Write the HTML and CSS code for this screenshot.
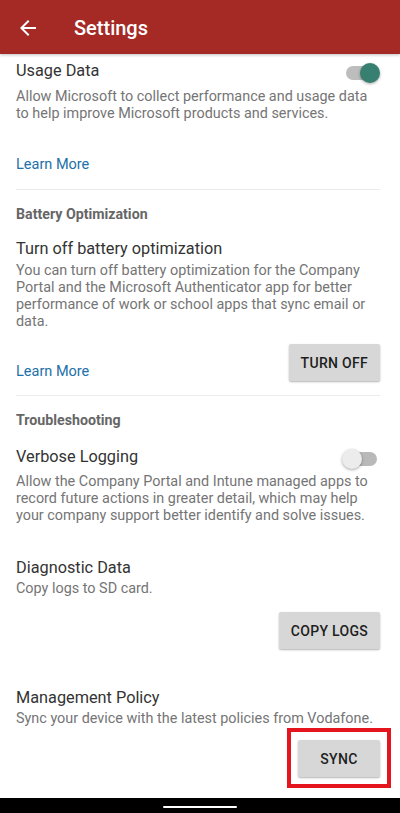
FILE: index.html
```html
<!DOCTYPE html>
<html>
<head>
    <meta charset="utf-8">
    <title>Settings</title>
    <link rel="stylesheet" href="styles.css">
</head>
<body>
    <div class="screen">
        <div class="appbar">
            <svg class="back" width="24" height="24" viewBox="0 0 24 24">
                <path d="M20 11H7.83l5.59-5.59L12 4l-8 8 8 8 1.41-1.41L7.83 13H20v-2z" fill="#fff"/>
            </svg>
            <span class="appbar-title">Settings</span>
        </div>

        <div class="content">
            <!-- usage data -->
            <div class="section">
                <div class="title-row first">
                    <span class="title">Usage Data</span>
                    <span class="toggle on"><span class="thumb"></span></span>
                </div>
                <p class="desc d-usage">Allow Microsoft to collect performance and usage data to help improve Microsoft products and services.</p>
                <a class="link link-usage">Learn More</a>
            </div>

            <!-- battery -->
            <div class="section battery">
                <div class="section-head">Battery Optimization</div>
                <div class="title t-battery">Turn off battery optimization</div>
                <p class="desc d-battery">You can turn off battery optimization for the Company Portal and the Microsoft Authenticator app for better performance of work or school apps that sync email or data.</p>
                <div class="action-row">
                    <a class="link">Learn More</a>
                    <button class="btn">TURN OFF</button>
                </div>
            </div>

            <!-- troubleshooting -->
            <div class="section last">
                <div class="section-head">Troubleshooting</div>
                <div class="title-row verbose">
                    <span class="title">Verbose Logging</span>
                    <span class="toggle off"><span class="thumb"></span></span>
                </div>
                <p class="desc d-verbose">Allow the Company Portal and Intune managed apps to record future actions in greater detail, which may help your company support better identify and solve issues.</p>

                <div class="title t-diag">Diagnostic Data</div>
                <p class="desc d-small">Copy logs to SD card.</p>
                <div class="btn-row copy">
                    <button class="btn">COPY LOGS</button>
                </div>

                <div class="title t-policy">Management Policy</div>
                <p class="desc d-small">Sync your device with the latest policies from Vodafone.</p>
                <div class="btn-row sync">
                    <div class="highlight">
                        <button class="btn">SYNC</button>
                    </div>
                </div>
            </div>
        </div>

        <div class="navbar"><span class="pill"></span></div>
    </div>
</body>
</html>
```

FILE: styles.css
```css
html, body {
    margin: 0;
    padding: 0;
    background: #fff;
}
.screen {
    width: 400px;
    height: 813px;
    display: flex;
    flex-direction: column;
    overflow: hidden;
    font-family: Roboto, "Noto Sans", "Liberation Sans", sans-serif;
    color: #333;
}

.appbar {
    height: 54px;
    flex: none;
    background: #a52a26;
    display: flex;
    align-items: center;
    box-shadow: 0 1px 3px rgba(0,0,0,0.25);
    position: relative;
    z-index: 1;
}
.back {
    margin-left: 16px;
    margin-top: 1px;
}
.appbar-title {
    margin-left: 34px;
    color: #fff;
    font-size: 20px;
    font-weight: 500;
    margin-top: 1px;
}

.content {
    flex: 1;
    padding: 0 20px 0 16px;
}
.section {
    border-bottom: 1px solid #ececec;
    padding-bottom: 15px;
}
.section.battery { padding-bottom: 14px; }
.section.last {
    border-bottom: none;
    padding-bottom: 0;
}

.title-row {
    display: flex;
    align-items: flex-start;
    justify-content: space-between;
}
.title-row.first { margin-top: 7px; }
.title-row.verbose { margin-top: 19px; }
.title {
    font-size: 16.3px;
    line-height: 20px;
    color: #333;
}
.section-head {
    margin-top: 16px;
    font-size: 14.2px;
    line-height: 16px;
    font-weight: 700;
    color: #666;
}
.desc {
    margin: 0;
    font-size: 14.4px;
    line-height: 17px;
    color: #757575;
}
.d-usage { margin-top: 7px; }
.d-battery { margin-top: 3px; }
.d-verbose { margin-top: 6px; }
.d-small { margin-top: 2px; }

.t-battery { margin-top: 17px; }
.t-diag { margin-top: 34px; }
.t-policy { margin-top: 39px; }

.link {
    display: block;
    font-size: 14.5px;
    line-height: 18px;
    color: #2270a9;
}
.link-usage { margin-top: 34px; }

/* switches */
.toggle {
    position: relative;
    width: 38px;
    height: 20px;
    margin: 2px 0 -2px;
    flex: none;
}
.toggle::before {
    content: "";
    position: absolute;
    left: 4px;
    right: 3px;
    top: 3px;
    height: 14px;
    border-radius: 7px;
    background: #bdbdbd;
}
.toggle .thumb {
    position: absolute;
    top: 0;
    width: 20px;
    height: 20px;
    border-radius: 50%;
    box-shadow: 0 1px 3px rgba(0,0,0,0.35);
}
.toggle.on .thumb {
    right: 0;
    background: #377f70;
}
.toggle.off .thumb {
    left: 0;
    background: #ececec;
}
.toggle.off::before { background: #b9b9b9; }

/* buttons */
.action-row {
    display: flex;
    justify-content: space-between;
    align-items: flex-end;
    margin-top: 14px;
}
.btn {
    height: 37px;
    min-width: 82px;
    padding: 0 12px;
    border: none;
    border-radius: 2px;
    background: #d6d7d6;
    color: #1e1e1e;
    font-family: Roboto, "Noto Sans", "Liberation Sans", sans-serif;
    font-size: 14px;
    font-weight: 500;
    letter-spacing: 0.3px;
    box-shadow: 0 1px 2px rgba(0,0,0,0.3);
}
.btn-row {
    display: flex;
    justify-content: flex-end;
}
.btn-row.copy { margin-top: 15px; }
.btn-row.sync { margin-top: 1px; }
.highlight {
    border: 4px solid #e5141d;
    padding: 8px 7px 7px 7px;
    margin-right: -11px;
}

.navbar {
    flex: none;
    height: 15px;
    background: #000;
    display: flex;
    justify-content: center;
    align-items: center;
}
.pill {
    width: 74px;
    height: 2px;
    background: #fff;
    border-radius: 1px;
    margin-top: 3px;
}
```
